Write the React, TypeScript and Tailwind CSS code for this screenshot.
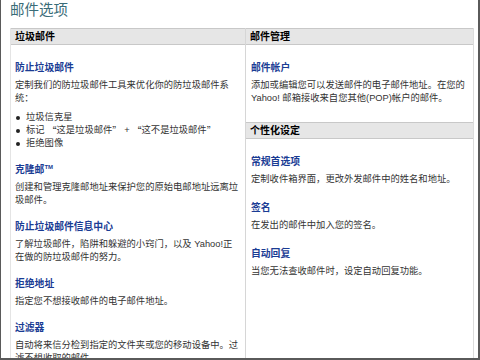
import React from "react";

const font = { fontFamily: '"Liberation Sans", "Noto Sans CJK SC", sans-serif' };
const cjk = { fontFamily: '"Noto Sans CJK SC", sans-serif' };

function Header({ children }: { children: React.ReactNode }) {
  return (
    <div className="h-[17px] bg-[#e6e6e6] border-t border-b border-[#c8c8c8] pl-[4px] text-[10px] leading-[15px] font-bold text-black">
      {children}
    </div>
  );
}

function Link({ children }: { children: React.ReactNode }) {
  return <div className="text-[9.8px] leading-[13px] font-bold text-[#1a3c94]">{children}</div>;
}

function Body({ children }: { children: React.ReactNode }) {
  return <div className="mt-[5px] text-[9.3px] leading-[13px] text-[#333] whitespace-nowrap">{children}</div>;
}

export default function App() {
  return (
    <div
      className="w-[480px] h-[360px] overflow-hidden bg-white border-l border-r-2 border-b-2 border-[#5a5a5a] flex flex-col"
      style={font}
    >
      <div className="h-[28px] pl-[9px] pt-[1px] text-[14.5px] leading-[18px] text-[#3a6c78] shrink-0">邮件选项</div>
      <div className="flex flex-1 ml-[9px] mr-[2px]">
        <div className="w-[236px] border-l border-[#e4e4e4] border-r border-r-[#d6d6d6]">
          <Header>垃圾邮件</Header>
          <div className="pl-[4px] pt-[16px] flex flex-col">
            <div>
              <Link>防止垃圾邮件</Link>
              <Body>
                定制我们的防垃圾邮件工具来优化你的防垃圾邮件系
                <br />
                统：
              </Body>
              <ul className="mt-[6px] text-[9.3px] leading-[13px] text-[#333]">
                <li className="flex items-center">
                  <span className="w-[4px] h-[4px] rounded-full bg-[#222] ml-[1px] mr-[6px]" />垃圾信克星
                </li>
                <li className="flex items-center whitespace-pre">
                  <span className="w-[4px] h-[4px] rounded-full bg-[#222] ml-[1px] mr-[6px]" />标记 <span style={cjk}>“</span>这是垃圾邮件<span style={cjk}>”</span> + <span style={cjk}>“</span>这不是垃圾邮件<span style={cjk}>”</span>
                </li>
                <li className="flex items-center">
                  <span className="w-[4px] h-[4px] rounded-full bg-[#222] ml-[1px] mr-[6px]" />拒绝图像
                </li>
              </ul>
            </div>
            <div className="mt-[13px]">
              <Link>
                克隆邮<span className="text-[6px] align-top leading-[8px]">TM</span>
              </Link>
              <Body>
                创建和管理克隆邮地址来保护您的原始电邮地址远离垃
                <br />
                圾邮件。
              </Body>
            </div>
            <div className="mt-[13px]">
              <Link>防止垃圾邮件信息中心</Link>
              <Body>
                了解垃圾邮件，陷阱和躲避的小窍门，以及 Yahoo!正
                <br />
                在做的防垃圾邮件的努力。
              </Body>
            </div>
            <div className="mt-[13px]">
              <Link>拒绝地址</Link>
              <Body>指定您不想接收邮件的电子邮件地址。</Body>
            </div>
            <div className="mt-[13px]">
              <Link>过滤器</Link>
              <Body>
                自动将来信分检到指定的文件夹或您的移动设备中。过
                <br />
                滤不想收取的邮件。
              </Body>
            </div>
          </div>
        </div>
        <div className="flex-1 border-r border-[#dcdcdc] mr-[2px] flex flex-col">
          <Header>邮件管理</Header>
          <div className="pl-[5px] pt-[16px]">
            <Link>邮件帐户</Link>
            <Body>
              添加或编辑您可以发送邮件的电子邮件地址。在您的
              <br />
              Yahoo! 邮箱接收来自您其他(POP)帐户的邮件。
            </Body>
          </div>
          <div className="mt-[17px]">
            <Header>个性化设定</Header>
          </div>
          <div className="pl-[5px] pt-[16px]">
            <Link>常规首选项</Link>
            <Body>定制收件箱界面，更改外发邮件中的姓名和地址。</Body>
            <div className="mt-[15px]">
              <Link>签名</Link>
              <Body>在发出的邮件中加入您的签名。</Body>
            </div>
            <div className="mt-[15px]">
              <Link>自动回复</Link>
              <Body>当您无法查收邮件时，设定自动回复功能。</Body>
            </div>
          </div>
        </div>
      </div>
    </div>
  );
}
